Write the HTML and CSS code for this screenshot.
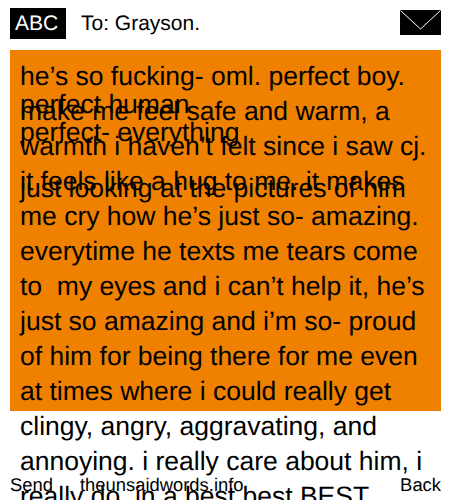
FILE: index.html
```
<!DOCTYPE html>
<html lang="en">
<head>
<meta charset="utf-8">
<title>To: Grayson.</title>
<link rel="stylesheet" href="styles.css">
</head>
<body>
<header class="top">
  <div class="abc">ABC</div>
  <div class="to">To: Grayson.</div>
  <svg class="env" width="41" height="25" viewBox="0 0 41 25"><rect width="41" height="25" fill="#000"/><path d="M0.5 0.5 L20.5 19 L40.5 0.5" fill="none" stroke="#fff" stroke-width="1"/></svg>
</header>
<main class="panel">
  <div class="overlay">perfect human<br>perfect- everything<br><br>just looking at the pictures of him</div>
  <p class="msg">he’s so fucking- oml. perfect boy. make me feel safe and warm, a warmth i haven’t felt since i saw cj. it feels like a hug to me. it makes me cry how he’s just so- amazing. everytime he texts me tears come to&nbsp; my eyes and i can’t help it, he’s just so amazing and i’m so- proud of him for being there for me even at times where i could really get clingy, angry, aggravating, and annoying. i really care about him, i really do. in a best best BEST</p>
</main>
<footer class="bottom">
  <span>Send</span>
  <span class="site">theunsaidwords.info</span>
  <span class="back">Back</span>
</footer>
</body>
</html>
```
FILE: styles.css
```
html, body { margin: 0; padding: 0; height: 500px; overflow: hidden; background: #fff; }
body { font-family: "Liberation Sans", Arial, sans-serif; color: #000; position: relative; text-rendering: geometricPrecision; }
.top { display: flex; align-items: flex-start; padding: 8px 9px 0 10px; height: 42px; box-sizing: border-box; }
.abc { width: 56px; height: 31px; box-sizing: border-box; padding-left: 5px; background: #000; color: #fff; font-size: 21px; line-height: 31px; }
.to { margin-left: 15px; font-size: 21px; line-height: 31px; flex: 1; }
.env { display: block; margin-top: 2px; }
.panel { margin: 8px 9px 0 10px; height: 361px; background: #f08000; position: relative; }
.msg { margin: 0; padding: 9px 10px 0; font-size: 26.5px; line-height: 35px; position: relative; }
.overlay { position: absolute; left: 10px; top: 40px; font-size: 26.5px; line-height: 28px; }
.bottom { position: absolute; left: 10px; right: 9px; top: 474px; display: flex; font-size: 18.4px; line-height: 21px; }
.site { margin-left: 27px; flex: 1; }
```
